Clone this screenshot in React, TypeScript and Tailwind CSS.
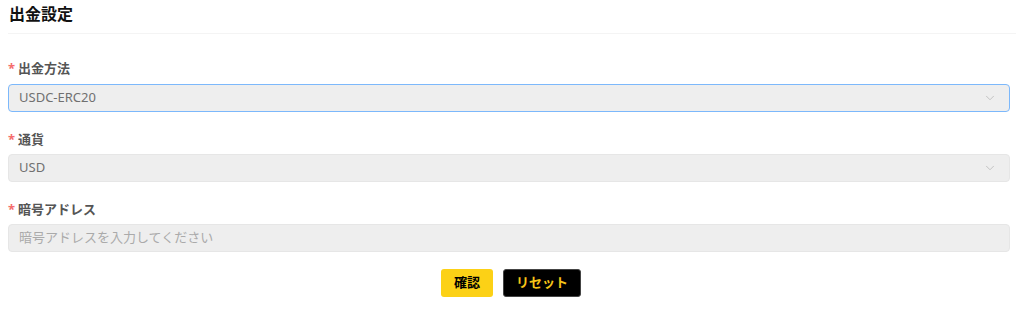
import { ChevronDown } from 'lucide-react';

const FONT = "font-['Noto_Sans','Noto_Sans_CJK_JP',sans-serif]";

const Label = ({ text }: { text: string }): React.ReactElement => (
	<div className="flex h-[20px] items-center text-[13px] font-bold leading-none text-[#555]">
		<span className="mr-[3px] text-[#f56c6c]">*</span>
		<span>{text}</span>
	</div>
);

const SelectBox = ({
	value,
	focused,
}: {
	value: string;
	focused?: boolean;
}): React.ReactElement => (
	<div
		className={
			focused
				? 'flex h-[28px] items-center rounded-[4px] border border-[#7cb8fb] bg-[#eeeeee] pl-[10px] pr-[12px]'
				: 'flex h-[28px] items-center rounded-[4px] border border-[#e6e6e6] bg-[#eeeeee] pl-[10px] pr-[12px]'
		}
	>
		<span className="grow text-[13px] text-[#707070]">{value}</span>
		<ChevronDown size={14} strokeWidth={1.3} className="text-[#b5b5b5]" />
	</div>
);

export default function App(): React.ReactElement {
	return (
		<div className={`${FONT} w-[1024px] h-[315px] bg-white px-[8px]`}>
			<div className="flex h-[34px] items-center border-b border-[#f4f4f4] pb-[5px] pl-[1px]">
				<span className="text-[16px] font-bold text-[#111]">出金設定</span>
			</div>

			<div className="mr-[6px] mt-[24px] flex flex-col">
				<Label text="出金方法" />
				<div className="mt-[6px]">
					<SelectBox value="USDC-ERC20" focused />
				</div>

				<div className="mt-[17px]">
					<Label text="通貨" />
				</div>
				<div className="mt-[5px]">
					<SelectBox value="USD" />
				</div>

				<div className="mt-[17px]">
					<Label text="暗号アドレス" />
				</div>
				<div className="mt-[5px]">
					<div className="flex h-[28px] items-center rounded-[4px] border border-[#e6e6e6] bg-[#eeeeee] px-[10px]">
						<span className="text-[13px] text-[#aaa]">暗号アドレスを入力してください</span>
					</div>
				</div>

				<div className="mt-[17px] flex justify-center gap-[10px] pl-[4px]">
					<button className="h-[28px] w-[52px] rounded-[3px] bg-[#fcd116] text-[13px] font-bold text-black">
						確認
					</button>
					<button className="h-[28px] w-[78px] rounded-[3px] border border-[#444] bg-black text-[13px] font-bold text-[#f5c518]">
						リセット
					</button>
				</div>
			</div>
		</div>
	);
}
